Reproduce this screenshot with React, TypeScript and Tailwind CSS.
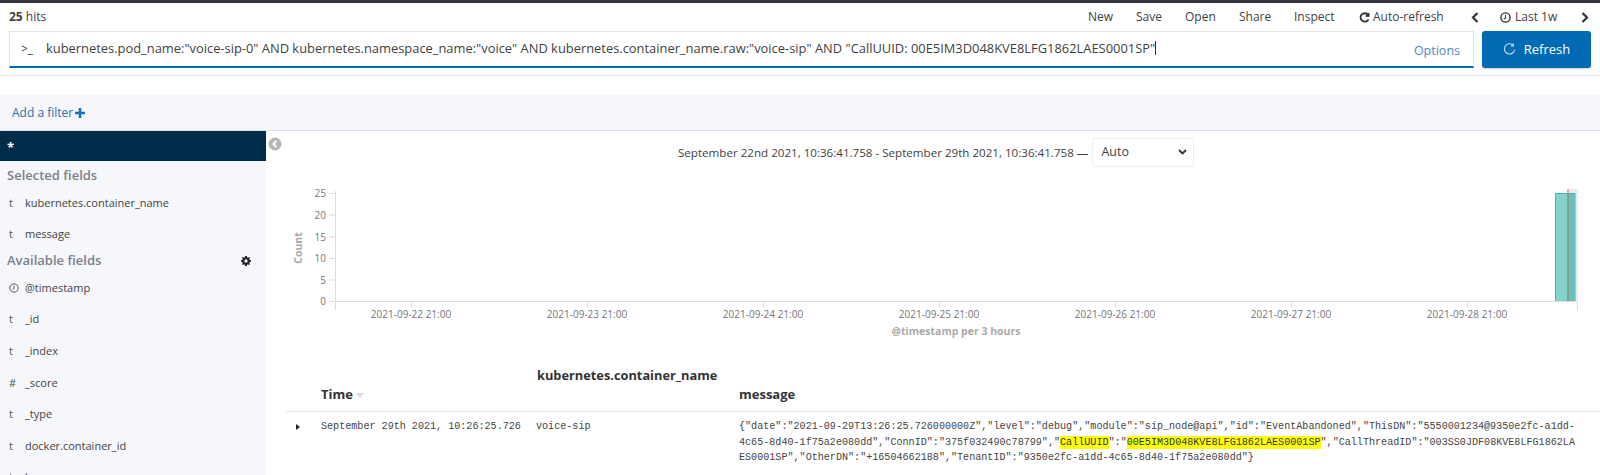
import React from "react";

const sans = "font-['Open_Sans',sans-serif]";

function Field({ icon, name }: { icon: React.ReactNode; name: string }) {
  return (
    <div className="flex h-[31.6px] items-center pl-[9px] text-[11px] text-[#444444]">
      <span className="flex w-[16px] items-center text-[11px] text-[#555555]">{icon}</span>
      <span>{name}</span>
    </div>
  );
}

function Clock({ size = 10, stroke = "#555555", weight = 1.2 }: { size?: number; stroke?: string; weight?: number }) {
  return (
    <svg width={size} height={size} viewBox="0 0 12 12" fill="none" stroke={stroke} strokeWidth={weight}>
      <circle cx="6" cy="6" r="5" />
      <path d="M6 3v3.400L4.200 7.600" strokeWidth="1.100" />
    </svg>
  );
}

function Chart() {
  const ticks = [
    ["2021-09-22 21:00", 411],
    ["2021-09-23 21:00", 587],
    ["2021-09-24 21:00", 763],
    ["2021-09-25 21:00", 939],
    ["2021-09-26 21:00", 1115],
    ["2021-09-27 21:00", 1291],
    ["2021-09-28 21:00", 1467],
  ] as const;
  const ys = [
    [25, 193.5],
    [20, 215],
    [15, 237],
    [10, 258.6],
    [5, 280],
    [0, 301.5],
  ] as const;
  const ox = 266;
  const oy = 175;
  return (
    <svg width={1334} height={165} viewBox={`${ox} ${oy} 1334 165`} className="block">
      <rect x={1567} y={189} width={11} height={112} fill="#ebebeb" />
      <rect x={1555.5} y={193.5} width={19.5} height={108} fill="#83d2cb" stroke="#45b5a8" strokeWidth="1" />
      <rect x={1569} y={194} width={5.500} height={107} fill="#66c3b9" />
      <rect x={1567} y={193} width={2} height={108} fill="#8c9a98" />
      <rect x={1567} y={189} width={2} height={4} fill="#f0a9a9" />
      <path d="M335.5 191v119M333 301.5h1244M1577.5 301v9" stroke="#dcdcdc" strokeWidth="1" fill="none" />
      {ys.map(([v, y]) => (
        <g key={v}>
          <path d={`M329 ${y}h6`} stroke="#dcdcdc" />
          <text x={326} y={y + 3.5} textAnchor="end" fontSize="10" fill="#777777" fontFamily="Open Sans">
            {v}
          </text>
        </g>
      ))}
      {ticks.map(([t, x]) => (
        <g key={t}>
          <path d={`M${x + 0.5} 301v6`} stroke="#dcdcdc" />
          <text x={x} y={318} textAnchor="middle" fontSize="10" fill="#777777" fontFamily="Open Sans">
            {t}
          </text>
        </g>
      ))}
      <text x={956} y={335} textAnchor="middle" fontSize="10.5" fontWeight="700" fill="#aaaaaa" fontFamily="Open Sans">
        @timestamp per 3 hours
      </text>
      <text
        transform="translate(302 248) rotate(-90)"
        textAnchor="middle"
        fontSize="10.5"
        fontWeight="700"
        fill="#aaaaaa"
        fontFamily="Open Sans"
      >
        Count
      </text>
    </svg>
  );
}

export default function App() {
  return (
    <div className={`h-[475px] w-[1600px] overflow-hidden bg-white text-[#3f3f3f] ${sans}`}>
      <div className="h-[3px] bg-[#343741]" />

      <div className="flex h-[28px] items-center justify-between pl-[9px] text-[12px]">
        <div>
          <span className="font-bold">25</span> hits
        </div>
        <div className="flex items-center">
          <span className="w-[48px]">New</span>
          <span className="w-[49px]">Save</span>
          <span className="w-[54px]">Open</span>
          <span className="w-[55px]">Share</span>
          <span className="w-[65px]">Inspect</span>
          <span className="flex w-[112px] items-center gap-[3px]">
            <svg width="11" height="11" viewBox="0 0 12 12" fill="none" stroke="#333333" strokeWidth="2">
              <path d="M10 3.200A4.600 4.600 0 1 0 10.400 8" />
              <path d="M10.800 1v3.600H7.200" strokeWidth="1.400" fill="#333333" />
            </svg>
            Auto-refresh
          </span>
          <svg width="8" height="11" viewBox="0 0 8 11" fill="none" stroke="#333333" strokeWidth="2.200" className="mr-[21px]">
            <path d="M6.500 1 2 5.500 6.500 10" />
          </svg>
          <span className="flex w-[81px] items-center gap-[4px]">
            <Clock size={11} stroke="#333333" weight={1.500} />
            Last 1w
          </span>
          <svg width="8" height="11" viewBox="0 0 8 11" fill="none" stroke="#333333" strokeWidth="2.200" className="mr-[11px]">
            <path d="M1.500 1 6 5.500 1.500 10" />
          </svg>
        </div>
      </div>

      <div className="flex h-[37px] gap-[8px] pl-[9px] pr-[9px]">
        <div className="flex flex-1 items-center border border-[#e4e4e4] border-b-[#006bb4] [border-bottom-width:2px] pl-[11px] pr-[13px] text-[12.9px]">
          <span className="w-[25px] text-[12px]">&gt;_</span>
          <span className="flex-1 whitespace-pre">
            kubernetes.pod_name:"voice-sip-0" AND kubernetes.namespace_name:"voice" AND kubernetes.container_name.raw:"voice-sip" AND "CallUUID: 00E5IM3D048KVE8LFG1862LAES0001SP"
            <span className="inline-block h-[14px] w-px translate-y-[2px] bg-[#333333]" />
          </span>
          <span className="pt-[5px] text-[12.5px] text-[#4a8cc4]">Options</span>
        </div>
        <div className="flex w-[109px] items-center justify-center gap-[8px] rounded-[3px] bg-[#006bb4] text-[13px] font-medium text-white shadow-[0_1px_2px_rgba(0,0,0,0.2)]">
          <svg width="13" height="13" viewBox="0 0 14 14" fill="none" stroke="#cfe3f2" strokeWidth="1.100">
            <path d="M11 2.500A5.500 5.500 0 1 0 12.500 7" />
            <path d="M11 .5v2.600H8.600" />
          </svg>
          Refresh
        </div>
      </div>

      <div className="mt-[7px] h-px bg-[#e3e6ea]" />
      <div className="h-[19px]" />

      <div className="flex h-[36px] items-center border-b border-[#d9dfe8] bg-[#f5f7fa] pl-[12px] text-[12px] text-[#2a6fa8]">
        Add a filter
        <svg width="10" height="10" viewBox="0 0 10 10" fill="#1470b8" className="ml-[2px]">
          <path d="M3.700 0h2.600v3.700H10v2.600H6.300V10H3.700V6.300H0V3.700h3.700z" />
        </svg>
      </div>

      <div className="flex">
        <aside className="h-[345px] w-[266px] shrink-0 bg-[#f5f7fa]">
          <div className="flex h-[30px] items-center bg-[#002b49] pl-[7px] pt-[4px] text-[13px] font-bold text-white">*</div>
          <div className="h-[26px] pl-[7px] pt-[5px] text-[13px] font-semibold text-[#7b8088]">Selected fields</div>
          <Field icon="t" name="kubernetes.container_name" />
          <Field icon="t" name="message" />
          <div className="flex h-[22px] items-center justify-between pl-[7px] pr-[15px] text-[13px] font-semibold text-[#7b8088]">
            Available fields
            <svg width="10" height="10" viewBox="0 0 12 12">
              <path
                fill="#222222"
                fillRule="evenodd"
                d="M5 0h2l.3 1.600 1.100.5L9.800 1.200l1 1-.9 1.400.5 1.100L12 5v2l-1.600.3-.5 1.100.9 1.400-1 1-1.400-.9-1.100.5L7 12H5l-.3-1.600-1.100-.5-1.400.9-1-1 .9-1.400-.5-1.100L0 7V5l1.600-.3.500-1.100-.9-1.400 1-1 1.400.9 1.100-.5zM6 4a2 2 0 1 0 0 4 2 2 0 0 0 0-4z"
              />
            </svg>
          </div>
          <Field icon={<Clock />} name="@timestamp" />
          <Field icon="t" name="_id" />
          <Field icon="t" name="_index" />
          <Field icon="#" name="_score" />
          <Field icon="t" name="_type" />
          <Field icon="t" name="docker.container_id" />
          <Field icon="t" name="log" />
        </aside>

        <main className="min-w-0 flex-1">
          <div className="flex h-[44px] items-center">
            <svg width="14" height="14" viewBox="0 0 14 14" className="mb-[19px] ml-[2px] mr-[396px]">
              <circle cx="7" cy="7" r="6.500" fill="#b4b7bb" />
              <path d="M8.500 3.800 5.300 7l3.200 3.200" stroke="#ffffff" strokeWidth="1.800" fill="none" />
            </svg>
            <span className="whitespace-nowrap text-[11.6px]">September 22nd 2021, 10:36:41.758 - September 29th 2021, 10:36:41.758 —</span>
            <div className="mb-[2px] ml-[4px] flex h-[29px] w-[102px] items-center justify-between rounded-[2px] border border-[#eeeeee] pl-[8px] pr-[6px] text-[12.5px]">
              Auto
              <svg width="9" height="6" viewBox="0 0 9 6" fill="none" stroke="#333333" strokeWidth="1.800">
                <path d="M1 1l3.500 3.500L8 1" />
              </svg>
            </div>
          </div>

          <Chart />

          <div className="ml-[20px] flex h-[72px] items-end border-b border-[#e3e6ea] pb-[7px] text-[#333333]">
            <div className="ml-[35px] flex w-[216px] items-center text-[13px] font-bold">
              Time
              <svg width="8" height="5" viewBox="0 0 8 5" className="ml-[3px] mt-[3px]">
                <path d="M0 0h8L4 5z" fill="#d5dee6" />
              </svg>
            </div>
            <div className="w-[202px] whitespace-nowrap pb-[19px] text-[12.8px] font-bold">kubernetes.container_name</div>
            <div className="text-[13px] font-bold">message</div>
          </div>

          <div className="ml-[20px] flex pt-[7px] font-['Liberation_Mono',monospace] text-[10.1px] leading-[15.5px] text-[#444444]">
            <div className="flex h-[15.5px] w-[35px] items-center pl-[10px]">
              <svg width="4" height="6" viewBox="0 0 4 6">
                <path d="M0 0l4 3-4 3z" fill="#222222" />
              </svg>
            </div>
            <div className="w-[215px] whitespace-pre">September 29th 2021, 10:26:25.726</div>
            <div className="w-[203px]">voice-sip</div>
            <div className="whitespace-pre">
              <div>{'{"date":"2021-09-29T13:26:25.726000000Z","level":"debug","module":"sip_node@api","id":"EventAbandoned","ThisDN":"5550001234@9350e2fc-a1dd-'}</div>
              <div>
                {'4c65-8d40-1f75a2e080dd","ConnID":"375f032490c78799","'}
                <mark className="bg-[#ffff00] py-[1px] text-[#333333]">CallUUID</mark>
                {'":"'}
                <mark className="bg-[#ffff00] py-[1px] text-[#333333]">00E5IM3D048KVE8LFG1862LAES0001SP</mark>
                {'","CallThreadID":"003SS0JDF08KVE8LFG1862LA'}
              </div>
              <div>{'ES0001SP","OtherDN":"+16504662188","TenantID":"9350e2fc-a1dd-4c65-8d40-1f75a2e080dd"}'}</div>
            </div>
          </div>
        </main>
      </div>
    </div>
  );
}
